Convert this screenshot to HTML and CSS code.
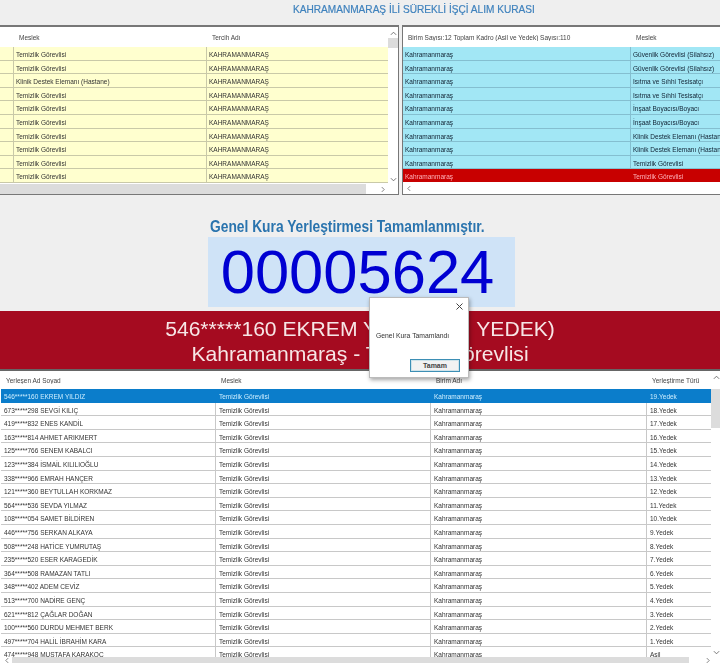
FILE: index.html
```html
<!DOCTYPE html>
<html>
<head>
    <title>Kura</title>
    <link rel="stylesheet" href="styles.css">
</head>
<body>
<h1 class="title">KAHRAMANMARAŞ İLİ SÜREKLİ İŞÇİ ALIM KURASI</h1>

<div class="top">
    <div class="grid grid-tercih">
        <div class="grid-main">
            <div class="head"><span class="c-stub"></span><span class="c-meslek">Meslek</span><span class="c-tercih">Tercih Adı</span></div>
            <div class="row yellow"><span class="c-stub"></span><span class="c-meslek">Temizlik Görevlisi</span><span class="c-tercih">KAHRAMANMARAŞ</span></div>
            <div class="row yellow"><span class="c-stub"></span><span class="c-meslek">Temizlik Görevlisi</span><span class="c-tercih">KAHRAMANMARAŞ</span></div>
            <div class="row yellow"><span class="c-stub"></span><span class="c-meslek">Klinik Destek Elemanı (Hastane)</span><span class="c-tercih">KAHRAMANMARAŞ</span></div>
            <div class="row yellow"><span class="c-stub"></span><span class="c-meslek">Temizlik Görevlisi</span><span class="c-tercih">KAHRAMANMARAŞ</span></div>
            <div class="row yellow"><span class="c-stub"></span><span class="c-meslek">Temizlik Görevlisi</span><span class="c-tercih">KAHRAMANMARAŞ</span></div>
            <div class="row yellow"><span class="c-stub"></span><span class="c-meslek">Temizlik Görevlisi</span><span class="c-tercih">KAHRAMANMARAŞ</span></div>
            <div class="row yellow"><span class="c-stub"></span><span class="c-meslek">Temizlik Görevlisi</span><span class="c-tercih">KAHRAMANMARAŞ</span></div>
            <div class="row yellow"><span class="c-stub"></span><span class="c-meslek">Temizlik Görevlisi</span><span class="c-tercih">KAHRAMANMARAŞ</span></div>
            <div class="row yellow"><span class="c-stub"></span><span class="c-meslek">Temizlik Görevlisi</span><span class="c-tercih">KAHRAMANMARAŞ</span></div>
            <div class="row yellow"><span class="c-stub"></span><span class="c-meslek">Temizlik Görevlisi</span><span class="c-tercih">KAHRAMANMARAŞ</span></div>
        </div>
        <div class="vscroll">
            <svg class="arrow" viewBox="0 0 8 5"><path d="M1 4l3-3 3 3"/></svg>
            <div class="thumb thumb-small"></div>
            <svg class="arrow arrow-end" viewBox="0 0 8 5"><path d="M1 1l3 3 3-3"/></svg>
        </div>
        <div class="hscroll hscroll-tercih">
            <div class="hbar"></div>
            <svg class="arrow-side" viewBox="0 0 5 8"><path d="M1 1l3 3-3 3"/></svg>
        </div>
    </div>

    <div class="grid grid-birim">
        <div class="grid-main">
            <div class="head"><span class="c-birim">Birim Sayısı:12 Toplam Kadro (Asil ve Yedek) Sayısı:110</span><span class="c-birim-meslek">Meslek</span></div>
            <div class="row cyan"><span class="c-birim">Kahramanmaraş</span><span class="c-birim-meslek">Güvenlik Görevlisi (Silahsız)</span></div>
            <div class="row cyan"><span class="c-birim">Kahramanmaraş</span><span class="c-birim-meslek">Güvenlik Görevlisi (Silahsız)</span></div>
            <div class="row cyan"><span class="c-birim">Kahramanmaraş</span><span class="c-birim-meslek">Isıtma ve Sıhhi Tesisatçı</span></div>
            <div class="row cyan"><span class="c-birim">Kahramanmaraş</span><span class="c-birim-meslek">Isıtma ve Sıhhi Tesisatçı</span></div>
            <div class="row cyan"><span class="c-birim">Kahramanmaraş</span><span class="c-birim-meslek">İnşaat Boyacısı/Boyacı</span></div>
            <div class="row cyan"><span class="c-birim">Kahramanmaraş</span><span class="c-birim-meslek">İnşaat Boyacısı/Boyacı</span></div>
            <div class="row cyan"><span class="c-birim">Kahramanmaraş</span><span class="c-birim-meslek">Klinik Destek Elemanı (Hastane)</span></div>
            <div class="row cyan"><span class="c-birim">Kahramanmaraş</span><span class="c-birim-meslek">Klinik Destek Elemanı (Hastane)</span></div>
            <div class="row cyan"><span class="c-birim">Kahramanmaraş</span><span class="c-birim-meslek">Temizlik Görevlisi</span></div>
            <div class="row red"><span class="c-birim">Kahramanmaraş</span><span class="c-birim-meslek">Temizlik Görevlisi</span></div>
        </div>
        <div class="hscroll">
            <svg class="arrow-side" viewBox="0 0 5 8"><path d="M4 1L1 4l3 3"/></svg>
        </div>
    </div>
</div>

<div class="counter-area">
    <h2 class="done">Genel Kura Yerleştirmesi Tamamlanmıştır.</h2>
    <div class="counter">00005624</div>
</div>

<div class="banner">
    <div>546*****160 EKREM YILDIZ (19. YEDEK)</div>
    <div>Kahramanmaraş - Temizlik Görevlisi</div>
</div>

<div class="grid grid-list">
    <div class="grid-main">
        <div class="head"><span class="c-ad">Yerleşen Ad Soyad</span><span class="c-lm">Meslek</span><span class="c-lb">Birim Adı</span><span class="c-tur">Yerleştirme Türü</span></div>
        <div class="row selected"><span class="c-ad">546*****160 EKREM YILDIZ</span><span class="c-lm">Temizlik Görevlisi</span><span class="c-lb">Kahramanmaraş</span><span class="c-tur">19.Yedek</span></div>
        <div class="row"><span class="c-ad">673*****298 SEVGİ KILIÇ</span><span class="c-lm">Temizlik Görevlisi</span><span class="c-lb">Kahramanmaraş</span><span class="c-tur">18.Yedek</span></div>
        <div class="row"><span class="c-ad">419*****832 ENES KANDİL</span><span class="c-lm">Temizlik Görevlisi</span><span class="c-lb">Kahramanmaraş</span><span class="c-tur">17.Yedek</span></div>
        <div class="row"><span class="c-ad">163*****814 AHMET ARIKMERT</span><span class="c-lm">Temizlik Görevlisi</span><span class="c-lb">Kahramanmaraş</span><span class="c-tur">16.Yedek</span></div>
        <div class="row"><span class="c-ad">125*****766 SENEM KABALCI</span><span class="c-lm">Temizlik Görevlisi</span><span class="c-lb">Kahramanmaraş</span><span class="c-tur">15.Yedek</span></div>
        <div class="row"><span class="c-ad">123*****384 İSMAİL KILILIOĞLU</span><span class="c-lm">Temizlik Görevlisi</span><span class="c-lb">Kahramanmaraş</span><span class="c-tur">14.Yedek</span></div>
        <div class="row"><span class="c-ad">338*****966 EMRAH HANÇER</span><span class="c-lm">Temizlik Görevlisi</span><span class="c-lb">Kahramanmaraş</span><span class="c-tur">13.Yedek</span></div>
        <div class="row"><span class="c-ad">121*****360 BEYTULLAH KORKMAZ</span><span class="c-lm">Temizlik Görevlisi</span><span class="c-lb">Kahramanmaraş</span><span class="c-tur">12.Yedek</span></div>
        <div class="row"><span class="c-ad">564*****536 SEVDA YILMAZ</span><span class="c-lm">Temizlik Görevlisi</span><span class="c-lb">Kahramanmaraş</span><span class="c-tur">11.Yedek</span></div>
        <div class="row"><span class="c-ad">108*****054 SAMET BİLDİREN</span><span class="c-lm">Temizlik Görevlisi</span><span class="c-lb">Kahramanmaraş</span><span class="c-tur">10.Yedek</span></div>
        <div class="row"><span class="c-ad">446*****756 SERKAN ALKAYA</span><span class="c-lm">Temizlik Görevlisi</span><span class="c-lb">Kahramanmaraş</span><span class="c-tur">9.Yedek</span></div>
        <div class="row"><span class="c-ad">508*****248 HATİCE YUMRUTAŞ</span><span class="c-lm">Temizlik Görevlisi</span><span class="c-lb">Kahramanmaraş</span><span class="c-tur">8.Yedek</span></div>
        <div class="row"><span class="c-ad">235*****520 ESER KARAGEDİK</span><span class="c-lm">Temizlik Görevlisi</span><span class="c-lb">Kahramanmaraş</span><span class="c-tur">7.Yedek</span></div>
        <div class="row"><span class="c-ad">364*****508 RAMAZAN TATLI</span><span class="c-lm">Temizlik Görevlisi</span><span class="c-lb">Kahramanmaraş</span><span class="c-tur">6.Yedek</span></div>
        <div class="row"><span class="c-ad">348*****402 ADEM CEVİZ</span><span class="c-lm">Temizlik Görevlisi</span><span class="c-lb">Kahramanmaraş</span><span class="c-tur">5.Yedek</span></div>
        <div class="row"><span class="c-ad">513*****700 NADİRE GENÇ</span><span class="c-lm">Temizlik Görevlisi</span><span class="c-lb">Kahramanmaraş</span><span class="c-tur">4.Yedek</span></div>
        <div class="row"><span class="c-ad">621*****812 ÇAĞLAR DOĞAN</span><span class="c-lm">Temizlik Görevlisi</span><span class="c-lb">Kahramanmaraş</span><span class="c-tur">3.Yedek</span></div>
        <div class="row"><span class="c-ad">100*****560 DURDU MEHMET BERK</span><span class="c-lm">Temizlik Görevlisi</span><span class="c-lb">Kahramanmaraş</span><span class="c-tur">2.Yedek</span></div>
        <div class="row"><span class="c-ad">497*****704 HALİL İBRAHİM KARA</span><span class="c-lm">Temizlik Görevlisi</span><span class="c-lb">Kahramanmaraş</span><span class="c-tur">1.Yedek</span></div>
        <div class="row row-cut"><span class="c-ad">474*****948 MUSTAFA KARAKOÇ</span><span class="c-lm">Temizlik Görevlisi</span><span class="c-lb">Kahramanmaraş</span><span class="c-tur">Asil</span></div>
    </div>
    <div class="vscroll">
        <svg class="arrow" viewBox="0 0 8 5"><path d="M1 4l3-3 3 3"/></svg>
        <div class="thumb thumb-big"></div>
        <svg class="arrow arrow-end" viewBox="0 0 8 5"><path d="M1 1l3 3 3-3"/></svg>
    </div>
    <div class="hscroll hscroll-list">
        <svg class="arrow-side" viewBox="0 0 5 8"><path d="M4 1L1 4l3 3"/></svg>
        <div class="hbar"></div>
        <svg class="arrow-side" viewBox="0 0 5 8"><path d="M1 1l3 3-3 3"/></svg>
    </div>
</div>

<div class="dialog">
    <svg class="dialog-close" viewBox="0 0 7 7"><path d="M.5.5l6 6M6.5.5l-6 6"/></svg>
    <p class="dialog-text">Genel Kura Tamamlandı</p>
    <button class="dialog-btn">Tamam</button>
</div>
</body>
</html>
```

FILE: styles.css
```css
html, body {
    margin: 0;
    height: 663px;
    overflow: hidden;
}

body {
    position: relative;
    background-color: #efefef;
    font-family: "Liberation Sans", Arial, sans-serif;
    font-size: 6.5px;
    color: #333;
    filter: blur(0.35px);
}

.title {
    margin: 0;
    height: 25px;
    padding: 3px 0 0 293px;
    box-sizing: border-box;
    font-size: 10.1px;
    line-height: 13px;
    font-weight: normal;
    color: #3f82bd;
    -webkit-text-stroke: 0.2px #3f82bd;
}

.top {
    display: flex;
    gap: 3px;
    height: 170px;
}

/* data grids */
.grid {
    display: grid;
    box-sizing: border-box;
    background-color: #fff;
    border: 1px solid #777;
    border-top-width: 2px;
    overflow: hidden;
}

.grid-tercih {
    width: 400px;
    margin-left: -1px;
    grid-template-columns: 1fr 10px;
    grid-template-rows: 1fr 10px;
}

.grid-birim {
    flex: 1;
    margin-right: -1px;
    grid-template-rows: 1fr 12px;
}

.grid-main {
    overflow: hidden;
    min-width: 0;
}

.head {
    display: flex;
    align-items: center;
    height: 20px;
    color: #444;
}

.row {
    display: flex;
    align-items: center;
    height: 13.6px;
    box-sizing: border-box;
    border-bottom: 1px solid #c8c8c8;
}

.head span, .row span {
    display: block;
    flex: none;
    box-sizing: border-box;
    white-space: nowrap;
    overflow: hidden;
}

.row span {
    height: 100%;
    line-height: 16px;
    padding-left: 2px;
    border-right: 1px solid #c8c8c8;
}

.row span:last-child {
    border-right: none;
}

.head span {
    padding-left: 5px;
}

.yellow {
    background-color: #ffffcf;
    border-bottom-color: #c9c9a8;
}

.yellow span {
    border-right-color: #c9c9a8;
}

.cyan {
    background-color: #a2e7f5;
    border-bottom-color: #84bfd0;
    color: #123;
}

.cyan span {
    border-right-color: #84bfd0;
}

.red {
    background-color: #c80000;
    color: #ffb0b8;
    border-bottom-color: #c80000;
}

.red span {
    border-right-color: #c80000;
}

.selected {
    background-color: #0b7dcb;
    color: #cdeeff;
    border-bottom-color: #0b7dcb;
}

.selected span {
    border-right-color: #0b7dcb;
}

.c-stub { width: 14px; }
.c-meslek { width: 193px; }
.c-tercih { width: 181px; }
.c-birim { width: 228px; }
.c-birim-meslek { width: 100px; }
.c-ad { width: 215px; }
.c-lm { width: 215px; }
.c-lb { width: 216px; }
.c-tur { width: 63px; }

/* scrollbars */
.vscroll {
    display: flex;
    flex-direction: column;
    align-items: center;
    padding-top: 4px;
    background-color: #fff;
}

.arrow {
    width: 7px;
    height: 5px;
    flex: none;
}

.arrow-end {
    margin-top: auto;
    margin-bottom: 2px;
}

.arrow path, .arrow-side path {
    fill: none;
    stroke: #666;
    stroke-width: 1;
}

.thumb {
    width: 100%;
    margin-top: 2px;
    background-color: #dcdcdc;
}

.thumb-small { height: 10px; }
.thumb-big { height: 39px; margin-top: 9px; }

.hscroll {
    display: flex;
    align-items: center;
    padding: 0 4px;
    background-color: #fff;
}

.arrow-side {
    width: 4px;
    height: 7px;
    flex: none;
}

.hbar {
    background-color: #dcdcdc;
    height: 100%;
}

.hscroll-tercih {
    grid-column: 1 / 3;
    padding: 0 12px 0 0;
}

.hscroll-tercih .hbar {
    width: 366px;
    margin-right: 15px;
}

.hscroll-list {
    grid-column: 1 / 3;
    padding: 0 11px 0 5px;
}

.hscroll-list .hbar {
    flex: 1;
    margin: 0 17px 0 3px;
}

/* counter */
.counter-area {
    height: 116px;
    padding-top: 22px;
    box-sizing: border-box;
}

.done {
    margin: 0 0 1px 210px;
    font-size: 16px;
    line-height: 19px;
    font-weight: bold;
    color: #2a74ae;
    white-space: nowrap;
    transform: scaleX(0.862);
    transform-origin: left;
}

.counter {
    width: 307px;
    height: 70px;
    margin-left: 208px;
    padding-right: 8px;
    box-sizing: border-box;
    background-color: #cfe3f7;
    color: #0000d2;
    font-size: 61.5px;
    line-height: 70px;
    text-align: center;
}

.banner {
    height: 58px;
    padding-top: 5px;
    box-sizing: border-box;
    background-color: #a50b20;
    color: #f7e6e6;
    font-size: 21.1px;
    line-height: 25px;
    text-align: center;
    white-space: nowrap;
}

.grid-list {
    height: 294px;
    margin: 0 -1px;
    grid-template-columns: 1fr 10px;
    grid-template-rows: 1fr 6px;
    border-width: 2px 0 0 1px;
    border-color: #666;
}

.grid-list .head {
    height: 18px;
}

.grid-list .head span {
    padding-left: 6px;
}

.grid-list .row {
    margin-left: 1px;
}

.grid-list .row span {
    padding-left: 3px;
}

/* dialog */
.dialog {
    position: absolute;
    left: 369px;
    top: 297px;
    width: 100px;
    height: 81px;
    box-sizing: border-box;
    background-color: #fff;
    border: 1px solid #bbb;
    box-shadow: 1px 2px 4px rgba(0, 0, 0, 0.35);
}

.dialog-close {
    position: absolute;
    right: 5px;
    top: 5px;
    width: 7px;
    height: 7px;
}

.dialog-close path {
    fill: none;
    stroke: #444;
    stroke-width: 1;
}

.dialog-text {
    position: absolute;
    left: 6px;
    top: 33px;
    margin: 0;
    font-size: 6.8px;
    line-height: 9px;
    white-space: nowrap;
}

.dialog-btn {
    position: absolute;
    left: 40px;
    top: 61px;
    width: 50px;
    height: 13px;
    padding: 0;
    background-color: #f2f2f2;
    border: 1px solid #3d8fb5;
    box-shadow: inset 0 0 0 1px #cfe3ea;
    font-family: inherit;
    font-size: 7px;
    font-weight: bold;
    color: #444;
}
```
